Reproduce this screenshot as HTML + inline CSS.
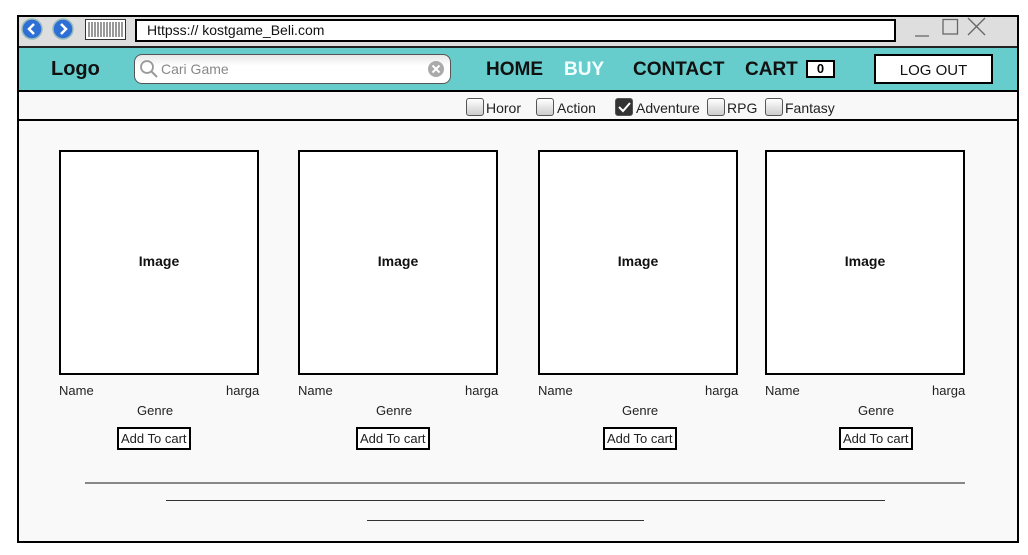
<!DOCTYPE html>
<html><head><style>
*{margin:0;padding:0;box-sizing:border-box}
body{width:1028px;height:555px;background:#fff;font-family:"Liberation Sans",Arial,sans-serif;position:relative;overflow:hidden}
.a{position:absolute}
.card{position:absolute;top:150px;width:200px;height:225px;border:2px solid #000;background:#fff;display:flex;align-items:center;justify-content:center;font-size:14px;font-weight:bold;color:#111;padding-bottom:4px}
.t{position:absolute;font-size:13px;color:#222}
.btn{position:absolute;top:427px;height:23px;border:2px solid #000;background:#fff;font-size:13px;line-height:19px;padding:0 2px;color:#222}
.cb{position:absolute;top:98px;width:18px;height:18px;border:1px solid #555;border-radius:3px;background:linear-gradient(#fff,#ccc)}
.cl{position:absolute;top:100px;font-size:14px;color:#222}
.nav{position:absolute;top:59px;font-size:19px;font-weight:bold;color:#111}
</style></head><body>
<div class="a" style="left:17px;top:15px;width:1002px;height:528px;border:2px solid #000;background:#f9f9f9"></div>
<div class="a" style="left:19px;top:17px;width:998px;height:29px;background:#dedede"></div>
<svg class="a" style="left:21px;top:18px" width="110" height="24">
<circle cx="11" cy="11" r="10" fill="#2e6fd6" stroke="#9bb" stroke-width="1.5"/><path d="M13 6l-5 5 5 5" stroke="#fff" stroke-width="2.5" fill="none"/>
<circle cx="42" cy="11" r="10" fill="#2e6fd6" stroke="#9bb" stroke-width="1.5"/><path d="M40 6l5 5-5 5" stroke="#fff" stroke-width="2.5" fill="none"/>
<rect x="64.5" y="1.5" width="40" height="20" fill="#fff" stroke="#333"/>
<path d="M68 4v15M71 4v15M74 4v15M77 4v15M80 4v15M83 4v15M86 4v15M89 4v15M92 4v15M95 4v15M98 4v15M101 4v15" stroke="#333" stroke-width="1"/>
</svg>
<div class="a" style="left:135px;top:19px;width:761px;height:23px;border:2px solid #000;background:#fff;font-size:14px;line-height:19px;padding-left:10px;color:#111">Httpss:// kostgame_Beli.com</div>
<svg class="a" style="left:910px;top:17px" width="80" height="26">
<path d="M5 19h14M33 2.5h14.5v14.5h-14.5zM58 1l17 17M75 1l-17 17" stroke="#666" stroke-width="1.3" fill="none"/>
</svg>
<div class="a" style="left:19px;top:46px;width:998px;height:46px;background:#66cdcc;border-top:2px solid #222;border-bottom:2px solid #000"></div>
<div class="a" style="left:51px;top:58px;font-size:20px;font-weight:bold;color:#111">Logo</div>
<div class="a" style="left:134px;top:54px;width:317px;height:30px;border:1px solid #555;border-radius:8px;background:linear-gradient(#e8e8e8,#fff 40%)"></div>
<svg class="a" style="left:139px;top:59px" width="20" height="20"><circle cx="8" cy="8" r="6" stroke="#999" stroke-width="1.8" fill="none"/><path d="M12 12l6 6" stroke="#999" stroke-width="2"/></svg>
<div class="a" style="left:161px;top:61px;font-size:14px;color:#888">Cari Game</div>
<svg class="a" style="left:427px;top:60px" width="18" height="18"><circle cx="9" cy="9" r="8" fill="#aaa"/><path d="M5.5 5.5l7 7M12.5 5.5l-7 7" stroke="#fff" stroke-width="2"/></svg>
<div class="nav" style="left:486px">HOME</div>
<div class="nav" style="left:564px;color:#f4ffff">BUY</div>
<div class="nav" style="left:633px">CONTACT</div>
<div class="nav" style="left:745px">CART</div>
<div class="a" style="left:806px;top:60px;width:29px;height:18px;border:2px solid #000;background:#fff;font-size:13px;font-weight:bold;text-align:center;line-height:14px">0</div>
<div class="a" style="left:874px;top:54px;width:119px;height:30px;border:2px solid #000;background:#fff;font-size:15px;text-align:center;line-height:29px;color:#111">LOG OUT</div>
<div class="a" style="left:19px;top:93px;width:998px;height:28px;background:#f8f8f8;border-bottom:2px solid #000"></div>
<div class="cb" style="left:466px"></div><div class="cl" style="left:486px">Horor</div>
<div class="cb" style="left:536px"></div><div class="cl" style="left:557px">Action</div>
<div class="cb" style="left:615px;background:#333"></div>
<svg class="a" style="left:615px;top:98px" width="18" height="18"><path d="M4 9l4 4 7-8" stroke="#fff" stroke-width="2" fill="none"/></svg>
<div class="cl" style="left:636px">Adventure</div>
<div class="cb" style="left:707px"></div><div class="cl" style="left:727px">RPG</div>
<div class="cb" style="left:765px"></div><div class="cl" style="left:785px">Fantasy</div>

<div class="card" style="left:59px">Image</div>
<div class="card" style="left:298px">Image</div>
<div class="card" style="left:538px">Image</div>
<div class="card" style="left:765px">Image</div>

<div class="t" style="left:59px;top:383px">Name</div><div class="t" style="left:226px;top:383px">harga</div><div class="t" style="left:137px;top:403px">Genre</div><div class="btn" style="left:117px">Add To cart</div>
<div class="t" style="left:298px;top:383px">Name</div><div class="t" style="left:465px;top:383px">harga</div><div class="t" style="left:376px;top:403px">Genre</div><div class="btn" style="left:356px">Add To cart</div>
<div class="t" style="left:538px;top:383px">Name</div><div class="t" style="left:705px;top:383px">harga</div><div class="t" style="left:622px;top:403px">Genre</div><div class="btn" style="left:603px">Add To cart</div>
<div class="t" style="left:765px;top:383px">Name</div><div class="t" style="left:932px;top:383px">harga</div><div class="t" style="left:858px;top:403px">Genre</div><div class="btn" style="left:839px">Add To cart</div>

<div class="a" style="left:85px;top:482px;width:880px;height:2px;background:#888"></div>
<div class="a" style="left:166px;top:500px;width:719px;height:1px;background:#333"></div>
<div class="a" style="left:367px;top:520px;width:277px;height:1px;background:#333"></div>
</body></html>
